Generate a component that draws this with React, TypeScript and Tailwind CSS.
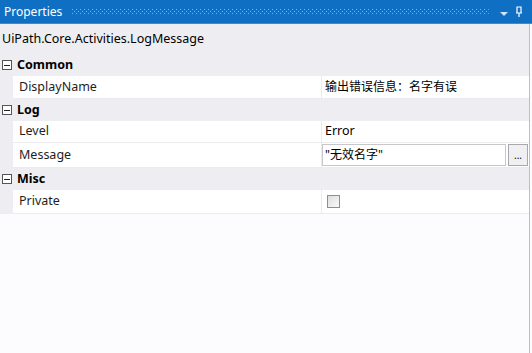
import React from "react";

const font = { fontFamily: '"Noto Sans", "Noto Sans CJK SC", sans-serif' };

function Minus() {
  return (
    <div className="w-[10px] h-[10px] border border-[#555] bg-white flex items-center justify-center ml-[2px] mr-[5px] shrink-0">
      <div className="w-[6px] h-px bg-[#222]" />
    </div>
  );
}

function Category({ name, h = "h-[22px]" }: { name: string; h?: string }) {
  return (
    <div className={`flex items-center ${h} bg-[#eeeef2]`}>
      <Minus />
      <span className="font-bold text-[12.5px] text-black">{name}</span>
    </div>
  );
}

function Row({ label, children, h = "h-[23px]" }: { label: string; children?: React.ReactNode; h?: string }) {
  return (
    <div className={`flex ${h} bg-[#eeeef2]`}>
      <div className="w-[13px] shrink-0" />
      <div className="flex flex-1 bg-white border-b border-[#ebebef]">
        <div className="w-[309px] shrink-0 flex items-center pl-[6px] border-r border-[#ebebef] text-[12.5px] text-[#1e1e1e]">
          {label}
        </div>
        <div className="flex-1 flex items-center">{children}</div>
      </div>
    </div>
  );
}

export default function App() {
  return (
    <div className="w-[532px] h-[353px] bg-[#fcfcfe] relative overflow-hidden" style={font}>
      <div className="h-[24px] bg-[#0f6fc2] flex items-center pl-[4px] pr-[8px] border-b border-[#3c8ad0]">
        <span className="text-white text-[12px]">Properties</span>
        <svg className="ml-[10px] flex-1 h-[6px]" preserveAspectRatio="none">
          <defs>
            <pattern id="dots" width="4" height="4" patternUnits="userSpaceOnUse">
              <rect x="0" y="0" width="1" height="1" fill="#7fb3e3" />
              <rect x="2" y="2" width="1" height="1" fill="#7fb3e3" />
            </pattern>
          </defs>
          <rect width="100%" height="100%" fill="url(#dots)" />
        </svg>
        <svg width="10" height="6" className="ml-[10px] mt-[4px]" viewBox="0 0 10 6">
          <path d="M1 1 L9 1 L5 5 Z" fill="#cfe2f5" />
        </svg>
        <svg width="10" height="12" className="ml-[5px]" viewBox="0 0 10 12">
          <path d="M3 1 H7 V7 H3 Z M2 7 H8 M5 7 V11" stroke="#ffffff" strokeWidth="1.2" fill="none" />
        </svg>
      </div>
      <div className="mr-[2px] border-r border-[#bdbdc4]">
        <div className="h-[30px] bg-[#eeeef2] flex items-center pl-[2px] text-[12.5px] text-black">
          UiPath.Core.Activities.LogMessage
        </div>
        <Category name="Common" />
        <Row label="DisplayName" h="h-[23px]">
          <span className="pl-[3px] text-[12px] text-black">输出错误信息：名字有误</span>
        </Row>
        <Category name="Log" />
        <Row label="Level" h="h-[22px]">
          <span className="pl-[3px] text-[12.5px] text-black">Error</span>
        </Row>
        <Row label="Message" h="h-[25px]">
          <div className="flex items-center w-full h-full pr-[1px]">
            <div className="flex-1 h-[22px] border border-[#c8c8cc] bg-white flex items-center pl-[2px] text-[12px] text-black">
              "无效名字"
            </div>
            <div className="w-[20px] h-[22px] ml-[2px] border border-[#a9a9ad] bg-[#f0f0f2] flex items-center justify-center text-[10px] text-black leading-none">
              ...
            </div>
          </div>
        </Row>
        <Category name="Misc" />
        <Row label="Private" h="h-[24px]">
          <div className="ml-[5px] w-[13px] h-[13px] border border-[#8e8e8e] bg-gradient-to-br from-[#dedede] to-[#fafafa]" />
        </Row>
        <div className="h-[141px] bg-[#fcfcfe]" />
      </div>
    </div>
  );
}
